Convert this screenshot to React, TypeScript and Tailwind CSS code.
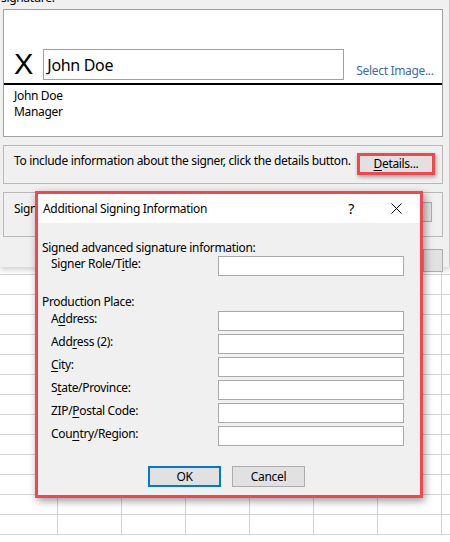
import React from 'react';

const font = "font-['Noto_Sans','Liberation_Sans',sans-serif]";

function U({ children }: { children: React.ReactNode }) {
  return <span className="underline underline-offset-[2px]">{children}</span>;
}

const fields: { label: React.ReactNode }[] = [
  { label: <>A<U>d</U>dress:</> },
  { label: <>Add<U>r</U>ess (2):</> },
  { label: <><U>C</U>ity:</> },
  { label: <>S<U>t</U>ate/Province:</> },
  { label: <>ZIP/<U>P</U>ostal Code:</> },
  { label: <>Cou<U>n</U>try/Region:</> },
];

function Field({ label }: { label: React.ReactNode }) {
  return (
    <div className="flex items-start">
      <span className="w-[180px] pl-[13px] leading-4">{label}</span>
      <div className="w-[186px] h-5 bg-white border border-[#a9a9a9]" />
    </div>
  );
}

export default function App() {
  return (
    <div className={`relative w-[450px] h-[542px] overflow-hidden bg-white text-[12px] tracking-[-0.33px] text-black ${font}`}>
      {/* Signature dialog behind */}
      <div className="relative z-10 h-[277px] w-[450px] bg-[#f0f0f0] border-r border-[#c8c8c8] shadow-[0_3px_6px_rgba(0,0,0,0.18)]">
        <div className="-mt-[10px] pl-[1px] leading-4 h-[19px]">signature:</div>
        <div className="ml-[3px] w-[440px] h-[128px] bg-white border border-[#a0a0a0]">
          <div className="flex items-end h-[73px] pl-[10px] pb-[3px]">
            <span className="text-[29px] leading-none mb-[1px] tracking-normal font-['Liberation_Sans',sans-serif]">X</span>
            <div className="ml-[10px] w-[301px] h-[31px] border border-[#a0a0a0] pl-[3px] flex items-center text-[16px]">John Doe</div>
            <span className="ml-[12px] text-[#3b6db0] mb-[1px] leading-4">Select Image...</span>
          </div>
          <div className="h-[2px] bg-black" />
          <div className="pl-[10px] pt-[3px] leading-4">
            <div>John Doe</div>
            <div>Manager</div>
          </div>
        </div>
        <div className="mt-[8px] ml-[3px] w-[440px] h-[39px] border border-[#b9b9b9] flex items-center pl-[10px]">
          <span className="w-[343px] -mt-[7px] whitespace-nowrap">To include information about the signer, click the details button.</span>
          <button className="w-[78px] h-[22px] -mt-[2px] bg-[#e1e1e1] border-[3px] border-[#f2484d] shadow-[1px_2px_4px_rgba(0,0,0,0.35)] flex items-center justify-center leading-none">
            <U>D</U>etails...
          </button>
        </div>
        <div className="mt-[8px] ml-[3px] w-[440px] h-[45px] border border-[#b9b9b9] flex items-start pl-[10px] pt-[7px]">
          <span className="w-[406px]">Sign</span>
          <div className="mt-[2px] w-[12px] h-[20px] border border-[#adadad] bg-[#e1e1e1]" />
        </div>
        <div className="mt-[12px] ml-[423px] w-[20px] h-[23px] border border-[#adadad] bg-[#e1e1e1]" />
      </div>

      {/* Spreadsheet grid */}
      <div className="flex flex-col">
        {[8, 20, 20, 20, 20, 20, 20, 20, 20, 20, 20, 20, 20, 20].map((h, r) => (
          <div key={r} className="flex border-b border-[#d4d4d4]" style={{ height: h }}>
            <div className="w-[58px] border-r border-[#d4d4d4]" />
            {[0, 1, 2, 3, 4, 5].map((c) => (
              <div key={c} className="w-[64px] border-r border-[#d4d4d4]" />
            ))}
          </div>
        ))}
      </div>

      {/* Additional Signing Information dialog */}
      <div className="absolute z-20 left-[35px] top-[191px] w-[388px] h-[307px] border-[3px] border-[#f2484d] bg-[#f0f0f0] shadow-[2px_3px_8px_rgba(0,0,0,0.4)]">
        <div className="h-[29px] bg-white flex items-center pl-[5px]">
          <span className="flex-1">Additional Signing Information</span>
          <span className="text-[14px] mr-[37px]">?</span>
          <svg width="11" height="11" viewBox="0 0 11 11" className="mr-[18px]">
            <path d="M0.5 0.5 L10.5 10.5 M10.5 0.5 L0.5 10.5" stroke="#000" strokeWidth="1" />
          </svg>
        </div>
        <div className="pl-[4px] pt-[17px] leading-4">
          <div>Signed advanced signature information:</div>
          <div className="flex items-start">
            <span className="w-[176px] pl-[9px] leading-4">
              Signer Role/T<U>i</U>tle:
            </span>
            <div className="w-[186px] h-5 bg-white border border-[#a9a9a9]" />
          </div>
          <div className="mt-[18px]">Production Place:</div>
          <div className="mt-[1px] flex flex-col gap-[3px]">
            {fields.map((f, i) => (
              <div key={i} className="-ml-[4px]">
                <Field label={f.label} />
              </div>
            ))}
          </div>
          <div className="mt-[20px] flex gap-[11px] pl-[106px]">
            <button className="w-[73px] h-[21px] bg-[#e1e1e1] border-2 border-[#0078d7] leading-none">OK</button>
            <button className="w-[73px] h-[21px] bg-[#e1e1e1] border border-[#adadad] leading-none">Cancel</button>
          </div>
        </div>
      </div>
    </div>
  );
}
